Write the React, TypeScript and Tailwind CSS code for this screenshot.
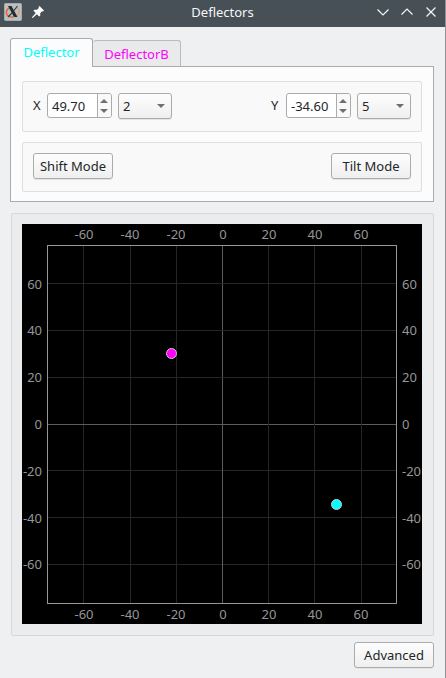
import { useState } from "react";

const ticks = [-60, -40, -20, 0, 20, 40, 60];
const columns = [61, 108, 154, 200, 246, 292, 339];
const rows = [340, 293, 246, 200, 153, 106, 59];
const labelColumns = [62, 108, 154, 201, 247, 293, 339];
const labelBaselines = [345, 299, 252, 205, 158, 111, 65];

const buttonStyle =
  "h-[26px] w-20 rounded-[3px] border border-[#a9abac] bg-linear-to-b from-[#fdfdfd] to-[#efefef] text-center whitespace-nowrap shadow-[0_1px_0_#e4e4e5]";

function SpinBox({ id, initial }: { id: string; initial: number }) {
  const [text, setText] = useState(initial.toFixed(2));
  const step = (amount: number) => setText(((parseFloat(text) || 0) + amount).toFixed(2));
  return (
    <div className="flex h-[25px] w-[65px] overflow-hidden rounded-[3px] border border-[#a9abac] bg-white">
      <input
        id={id}
        type="text"
        inputMode="decimal"
        value={text}
        onChange={(e) => setText(e.target.value)}
        className="w-[49px] min-w-0 bg-transparent pl-1 outline-none"
      />
      <div className="flex flex-1 flex-col justify-center gap-1.5 border-l border-[#a9abac] bg-[#f9f9f9] pr-px">
        <button type="button" aria-label="Increase" onClick={() => step(0.1)} className="flex justify-center">
          <svg className="block" width="8" height="4" viewBox="0 0 8 4" fill="#6d6f70"><path d="M4 0 8 4H0z" /></svg>
        </button>
        <button type="button" aria-label="Decrease" onClick={() => step(-0.1)} className="flex justify-center">
          <svg className="block" width="8" height="4" viewBox="0 0 8 4" fill="#6d6f70"><path d="M0 0h8L4 4z" /></svg>
        </button>
      </div>
    </div>
  );
}

function StepSelect({ label, initial }: { label: string; initial: string }) {
  return (
    <div className="relative ml-1.5">
      <select
        aria-label={label}
        defaultValue={initial}
        className="block h-[26px] w-[54px] appearance-none rounded-[3px] border border-[#a9abac] bg-linear-to-b from-[#fdfdfd] to-[#efefef] pl-1 shadow-[0_1px_0_#e4e4e5] outline-none"
      >
        <option>1</option>
        <option>2</option>
        <option>5</option>
        <option>10</option>
      </select>
      <svg className="pointer-events-none absolute top-[11px] right-[7px]" width="8" height="4" viewBox="0 0 8 4" fill="#6d6f70">
        <path d="M0 0h8L4 4z" />
      </svg>
    </div>
  );
}

function TitleBar() {
  return (
    <header className="grid h-[27px] grid-cols-[1fr_auto_1fr] items-center bg-[#475057] pb-[3px] text-[#f5f6f6]">
      <div className="flex items-center gap-2.5 pl-1">
        <svg width="18" height="18" viewBox="0 0 18 18" fill="none">
          <rect x=".5" y=".5" width="17" height="17" rx="1" fill="#b9c0c1" stroke="#a5acae" />
          <path d="M7 4.500C3.500 5.500 2 8 2.500 10.500c.5 2.500 3.500 4 7 3.500" stroke="#e5683c" strokeWidth="1.600" />
          <path d="M12 4.500c3 1 4 3.500 3 6-.8 1.700-2 2.500-3.500 3" stroke="#e6a078" strokeWidth="1.400" />
          <path d="M4 3h3.500l6 11H10z" fill="#262b2e" />
          <path d="M13.500 3 9.500 8M8 10 4 14" stroke="#363b3e" strokeWidth="1.200" />
        </svg>
        <button type="button" aria-label="Keep above others">
          <svg className="block" width="12" height="12" viewBox="0 0 12 12" fill="#fff">
            <path d="M7.500 0 12 4.500l-1 1-1-.3-1.800 2 .1 2.300-1.100 1-2.300-2.300L1 11.800 0 12l.2-1L3.700 7 1.400 4.700l1.100-1 2.400.1 2-1.800-.4-1z" />
          </svg>
        </button>
      </div>
      <h1>Deflectors</h1>
      <div className="flex items-center justify-end gap-3 pr-2">
        <button type="button" aria-label="Minimize">
          <svg className="block" width="12" height="12" viewBox="0 0 12 12" fill="none" stroke="currentColor" strokeWidth="1.200"><path d="M.5 3.500 6 9l5.500-5.500" /></svg>
        </button>
        <button type="button" aria-label="Maximize">
          <svg className="block" width="12" height="12" viewBox="0 0 12 12" fill="none" stroke="currentColor" strokeWidth="1.200"><path d="M.5 8.500 6 3l5.500 5.500" /></svg>
        </button>
        <button type="button" aria-label="Close">
          <svg className="block" width="12" height="12" viewBox="0 0 12 12" fill="none" stroke="currentColor" strokeWidth="1.200"><path d="m1.500 1.500 9 9m0-9-9 9" /></svg>
        </button>
      </div>
    </header>
  );
}

function Plot() {
  return (
    <svg className="block w-full bg-black" viewBox="0 0 400 400" role="img" aria-label="Deflector positions">
      <g fill="none" strokeWidth="1">
        {ticks.map((tick, i) => (
          <g key={tick} stroke={tick === 0 ? "#5c5c5c" : "#262626"}>
            <path d={`M${columns[i] + 0.5} 22V379`} />
            <path d={`M26 ${rows[i] + 0.5}H375`} />
          </g>
        ))}
        <rect x="25.5" y="21.5" width="349" height="358" stroke="#969696" />
      </g>
      <g fill="#969696" fontSize="13">
        {ticks.map((tick, i) => (
          <g key={tick}>
            <text x={labelColumns[i]} y="15" textAnchor="middle">{tick}</text>
            <text x={labelColumns[i]} y="395" textAnchor="middle">{tick}</text>
            <text x="20" y={labelBaselines[i]} textAnchor="end">{tick}</text>
            <text x="380" y={labelBaselines[i]}>{tick}</text>
          </g>
        ))}
      </g>
      <circle cx="149.5" cy="129.5" r="5" fill="#f0f" stroke="#c8c8c8" />
      <circle cx="314.5" cy="280.5" r="5" fill="#0ff" stroke="#c8c8c8" />
    </svg>
  );
}

export default function App() {
  const [tab, setTab] = useState(0);
  const active = "h-[29px] w-[83px] border-b-0 bg-[#fcfcfc] -mb-px pb-0.5";
  const inactive = "h-[26px] w-[88px] border-b-0 border-l-0 bg-[#e9eaea]";
  return (
    <div className="min-h-screen border-r border-[#8d9193] bg-[#eff0f1] font-['Noto_Sans',sans-serif] text-[13px] leading-[18px] text-[#232629]">
      <TitleBar />
      <main className="px-[11px] pt-[11px] pb-2.5">
        <section className="-ml-px">
          <div role="tablist" className="flex items-end">
            <button type="button" role="tab" aria-selected={tab === 0} onClick={() => setTab(0)}
              className={`relative rounded-t-[3px] border border-[#a9abac] text-[#0ff] ${tab === 0 ? active : inactive}`}>
              Deflector
            </button>
            <button type="button" role="tab" aria-selected={tab === 1} onClick={() => setTab(1)}
              className={`relative rounded-t-[3px] border border-[#b9bbbc] text-[#f0f] ${tab === 1 ? active : inactive}`}>
              DeflectorB
            </button>
          </div>
          <div role="tabpanel" className="flex flex-col gap-2.5 border border-[#a9abac] bg-[#fcfcfc] px-[11px] pt-3.5 pb-[9px]">
            <div className="flex h-[51px] justify-between rounded-[2px] border border-[#dedfdf] bg-[#f9f9f9] px-2.5 pt-[11px]">
              <div className="flex items-start">
                <label htmlFor="deflector-x" className="w-3.5 leading-[25px]">X</label>
                <SpinBox id="deflector-x" initial={49.7} />
                <StepSelect label="X step" initial="2" />
              </div>
              <div className="flex items-start">
                <label htmlFor="deflector-y" className="w-[15px] leading-[25px]">Y</label>
                <SpinBox id="deflector-y" initial={-34.6} />
                <StepSelect label="Y step" initial="5" />
              </div>
            </div>
            <div className="flex h-[50px] justify-between rounded-[2px] border border-[#dedfdf] bg-[#f9f9f9] px-2.5 pt-2.5">
              <button type="button" className={buttonStyle}>Shift Mode</button>
              <button type="button" className={buttonStyle}>Tilt Mode</button>
            </div>
          </div>
        </section>
        <section className="mt-[11px] rounded-[2px] border border-[#d5d7d8] bg-[#ebeced] pt-2.5 pr-[11px] pb-[11px] pl-2.5">
          <Plot />
        </section>
        <div className="mt-1.5 flex justify-end">
          <button type="button" className={buttonStyle}>Advanced</button>
        </div>
      </main>
    </div>
  );
}
